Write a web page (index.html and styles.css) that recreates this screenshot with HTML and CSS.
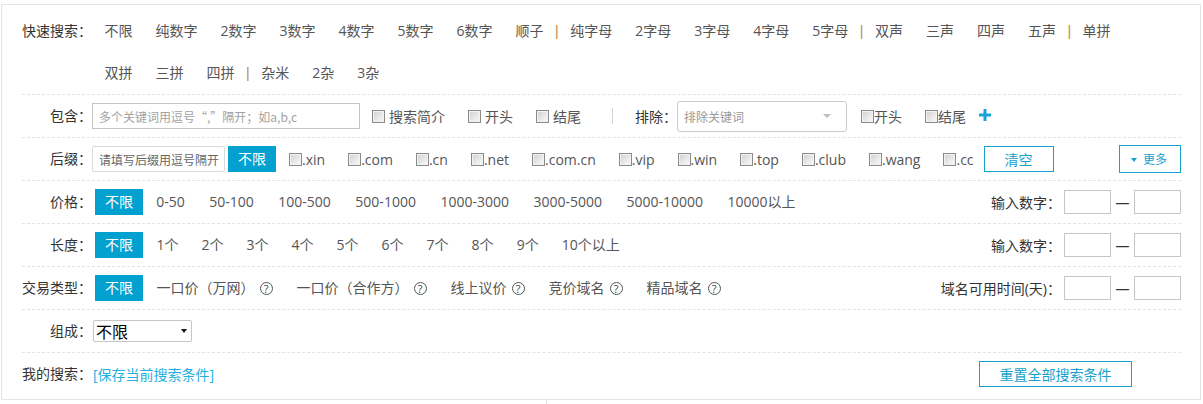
FILE: index.html
```html
<!DOCTYPE html>
<html lang="zh-CN">
<head>
<meta charset="utf-8">
<title>域名搜索</title>
<link rel="stylesheet" href="styles.css">
</head>
<body>
<div class="panel">
  <div class="row row-quick">
    <div class="label">快速搜索：</div>
    <div class="quick-items">
      <a class="opt">不限</a>
      <a class="opt">纯数字</a>
      <a class="opt">2数字</a>
      <a class="opt">3数字</a>
      <a class="opt">4数字</a>
      <a class="opt">5数字</a>
      <a class="opt">6数字</a>
      <a class="opt">顺子</a><span class="sep">|</span>
      <a class="opt">纯字母</a>
      <a class="opt">2字母</a>
      <a class="opt">3字母</a>
      <a class="opt">4字母</a>
      <a class="opt">5字母</a><span class="sep">|</span>
      <a class="opt">双声</a>
      <a class="opt">三声</a>
      <a class="opt">四声</a>
      <a class="opt">五声</a><span class="sep">|</span>
      <a class="opt">单拼</a>
      <a class="opt">双拼</a>
      <a class="opt">三拼</a>
      <a class="opt">四拼</a><span class="sep">|</span>
      <a class="opt">杂米</a>
      <a class="opt">2杂</a>
      <a class="opt">3杂</a>
    </div>
  </div>

  <div class="row">
    <div class="label">包含：</div>
    <input class="text-input kw-input" type="text" placeholder="多个关键词用逗号“,”隔开；如a,b,c">
    <label class="check check-first-kw"><span class="box"></span><span class="check-text spaced">搜索简介</span></label>
    <label class="check"><span class="box"></span><span class="check-text spaced">开头</span></label>
    <label class="check"><span class="box"></span><span class="check-text spaced">结尾</span></label>
    <span class="vsep"></span>
    <span class="sub-label">排除：</span>
    <div class="fake-select exclude-select"><span class="ph">排除关键词</span><span class="caret caret-light"></span></div>
    <label class="check check-after-select"><span class="box"></span><span class="check-text">开头</span></label>
    <label class="check"><span class="box"></span><span class="check-text">结尾</span></label>
    <svg class="plus" width="12" height="12" viewBox="0 0 12 12" aria-hidden="true"><rect x="4.5" y="0" width="3" height="12" fill="#17a4d6"/><rect x="0" y="4.5" width="12" height="3" fill="#17a4d6"/></svg>
  </div>

  <div class="row">
    <div class="label">后缀：</div>
    <input class="text-input suffix-input" type="text" placeholder="请填写后缀用逗号隔开">
    <a class="opt-on suffix-all">不限</a>
    <label class="check check-first-suffix"><span class="box"></span><span class="check-text">.xin</span></label>
    <label class="check"><span class="box"></span><span class="check-text">.com</span></label>
    <label class="check"><span class="box"></span><span class="check-text">.cn</span></label>
    <label class="check"><span class="box"></span><span class="check-text">.net</span></label>
    <label class="check"><span class="box"></span><span class="check-text">.com.cn</span></label>
    <label class="check"><span class="box"></span><span class="check-text">.vip</span></label>
    <label class="check"><span class="box"></span><span class="check-text">.win</span></label>
    <label class="check"><span class="box"></span><span class="check-text">.top</span></label>
    <label class="check"><span class="box"></span><span class="check-text">.club</span></label>
    <label class="check"><span class="box"></span><span class="check-text">.wang</span></label>
    <label class="check"><span class="box"></span><span class="check-text">.cc</span></label>
    <a class="btn btn-clear">清空</a>
    <a class="btn btn-more"><span class="more-caret"></span>更多</a>
  </div>

  <div class="row row-price">
    <div class="label">价格：</div>
    <a class="opt-on">不限</a>
    <a class="opt">0-50</a>
    <a class="opt">50-100</a>
    <a class="opt">100-500</a>
    <a class="opt">500-1000</a>
    <a class="opt">1000-3000</a>
    <a class="opt">3000-5000</a>
    <a class="opt">5000-10000</a>
    <a class="opt">10000以上</a>
    <div class="range">
      <span class="range-label">输入数字：</span>
      <input class="num-input" type="text">
      <span class="dash">—</span>
      <input class="num-input" type="text">
    </div>
  </div>

  <div class="row">
    <div class="label">长度：</div>
    <a class="opt-on">不限</a>
    <a class="opt">1个</a>
    <a class="opt">2个</a>
    <a class="opt">3个</a>
    <a class="opt">4个</a>
    <a class="opt">5个</a>
    <a class="opt">6个</a>
    <a class="opt">7个</a>
    <a class="opt">8个</a>
    <a class="opt">9个</a>
    <a class="opt">10个以上</a>
    <div class="range">
      <span class="range-label">输入数字：</span>
      <input class="num-input" type="text">
      <span class="dash">—</span>
      <input class="num-input" type="text">
    </div>
  </div>

  <div class="row">
    <div class="label">交易类型：</div>
    <a class="opt-on">不限</a>
    <a class="opt">一口价（万网）<span class="help">?</span></a>
    <a class="opt">一口价（合作方）<span class="help">?</span></a>
    <a class="opt">线上议价<span class="help">?</span></a>
    <a class="opt">竞价域名<span class="help">?</span></a>
    <a class="opt">精品域名<span class="help">?</span></a>
    <div class="range">
      <span class="range-label">域名可用时间(天)：</span>
      <input class="num-input" type="text">
      <span class="dash">—</span>
      <input class="num-input" type="text">
    </div>
  </div>

  <div class="row">
    <div class="label">组成：</div>
    <div class="fake-select compose-select"><span class="val">不限</span><span class="caret caret-dark"></span></div>
  </div>

  <div class="row row-last">
    <div class="label label-left">我的搜索：</div>
    <a class="save-link">[保存当前搜索条件]</a>
    <a class="btn btn-reset">重置全部搜索条件</a>
  </div>
</div>
<div class="below"><div class="below-col"></div></div>
</body>
</html>
```

FILE: styles.css
```css
* { box-sizing: border-box; }

html, body {
  margin: 0;
  padding: 0;
  background: #fff;
}

body {
  font-family: "Open Sans", "Noto Sans CJK SC", sans-serif;
  font-size: 14px;
  color: #333;
}

a { text-decoration: none; cursor: pointer; }

.panel {
  width: 1200px;
  margin: 4px 0 0 1px;
  border: 1px solid #e4e4e4;
  padding: 0 19px 4px 20px;
}

.row {
  display: flex;
  align-items: center;
  height: 43px;
  border-bottom: 1px dashed #e3e3e3;
  white-space: nowrap;
}

.row-last {
  height: 42px;
  border-bottom: none;
}

.row-quick {
  height: auto;
  align-items: flex-start;
  padding-top: 5px;
}

.label,
.range-label,
.sub-label {
  font-family: "Open Sans", "Noto Sans CJK JP", sans-serif;
  color: #333;
}

.label {
  flex: none;
  width: 70px;
  text-align: right;
  line-height: 42px;
}

.label-left { text-align: left; }

.quick-items {
  display: flex;
  flex-wrap: wrap;
  align-items: center;
  width: 1060px;
  margin-left: 1px;
}

.quick-items .opt { line-height: 42px; }

.opt {
  padding: 0 11.5px;
  color: #555;
  line-height: 26px;
  display: inline-flex;
  align-items: center;
}

.row-price .opt { padding: 0 12.25px; }

.sep {
  font-family: "Liberation Sans", sans-serif;
  color: #b5894f;
  line-height: 42px;
}

.opt-on {
  flex: none;
  height: 26px;
  line-height: 26px;
  padding: 0 10px;
  margin: 0 2px 0 3px;
  background: #03a1cf;
  color: #fff;
}

.row-price .opt-on { margin-right: 1px; }

.suffix-all { margin-right: 13px; }

/* inputs */
.text-input {
  font-family: "Noto Sans CJK SC", "Open Sans", sans-serif;
  font-size: 12px;
  padding: 0 0 0 6px;
  margin: 0;
  outline: none;
  background: #fff;
}

.kw-input {
  width: 268px;
  height: 26px;
  border: 1px solid #c4c4c4;
}

.kw-input::placeholder { color: #a2a2a2; }

.suffix-input {
  width: 133px;
  height: 26px;
  border: 1px solid #dadada;
  border-radius: 2px;
}

.suffix-input::placeholder { color: #666; }

/* checkboxes */
.check {
  display: inline-flex;
  align-items: center;
  margin-left: 23px;
  color: #555;
}

.check-first-kw { margin-left: 12px; }
.check-after-select { margin-left: 14px; }
.check-first-suffix { margin-left: 0; }

.box {
  flex: none;
  width: 13px;
  height: 13px;
  border: 1px solid #8a8a8a;
  background: linear-gradient(135deg, #cfcfcf 0%, #e8e8e8 55%, #fafafa 100%);
  box-shadow: inset 0 0 0 1px #f2f2f2;
}

.check-text.spaced { margin-left: 4px; }

.vsep {
  flex: none;
  width: 1px;
  height: 16px;
  background: #d4d4d4;
  margin-left: 31px;
}

.sub-label { margin-left: 22px; }

.fake-select {
  display: flex;
  align-items: center;
  background: #fff;
}

.exclude-select {
  width: 170px;
  height: 31px;
  border: 1px solid #cccccc;
  border-radius: 3px;
  padding-left: 6px;
  font-family: "Noto Sans CJK SC", "Open Sans", sans-serif;
  font-size: 12px;
  color: #999;
}

.caret {
  margin-left: auto;
  width: 0;
  height: 0;
  border-left: 4px solid transparent;
  border-right: 4px solid transparent;
}

.caret-light {
  border-top: 4px solid #bdbdbd;
  margin-right: 15px;
}

.compose-select {
  width: 99px;
  height: 22px;
  margin-left: 1px;
  border: 1px solid #c6c6c6;
  border-radius: 2px;
  padding-left: 2px;
  font-family: "Noto Sans CJK SC", "Open Sans", sans-serif;
  font-size: 16px;
  color: #000;
}

.compose-select .val { line-height: 20px; }

.caret-dark {
  border-left-width: 3.5px;
  border-right-width: 3.5px;
  border-top: 4px solid #111;
  margin-right: 4px;
}

.plus {
  flex: none;
  margin-left: 13px;
  margin-bottom: 3px;
}

/* buttons */
.btn {
  display: inline-flex;
  align-items: center;
  justify-content: center;
  border: 1px solid #17a2cd;
  color: #17a2cd;
  background: #fff;
}

.btn-clear {
  width: 70px;
  height: 26px;
  margin-left: 10px;
}

.btn-more {
  width: 62px;
  height: 28px;
  margin-left: auto;
  font-size: 12px;
  padding-right: 2px;
}

.more-caret {
  width: 0;
  height: 0;
  border-left: 3px solid transparent;
  border-right: 3px solid transparent;
  border-top: 4px solid #17a2cd;
  margin-right: 6px;
  margin-top: 1px;
}

.btn-reset {
  width: 153px;
  height: 26px;
  margin-left: auto;
  margin-right: 49px;
}

.save-link {
  margin-left: 1px;
  color: #22b0df;
}

/* help icon */
.help {
  flex: none;
  width: 13px;
  height: 13px;
  margin-left: 5px;
  margin-right: 1px;
  border: 1px solid #555;
  border-radius: 50%;
  font-size: 11px;
  line-height: 11px;
  text-align: center;
  color: #444;
}

/* ranges */
.range {
  margin-left: auto;
  display: flex;
  align-items: center;
}

.range-label { margin-right: 3px; }

.num-input {
  width: 47px;
  height: 24px;
  border: 1px solid #c6c6c6;
  margin: 0;
  padding: 0;
  outline: none;
}

.dash {
  width: 23px;
  text-align: center;
  color: #333;
}

.below {
  display: flex;
  height: 5px;
}

.below-col {
  margin-left: 546px;
  border-left: 1px solid #e4e4e4;
}
```
